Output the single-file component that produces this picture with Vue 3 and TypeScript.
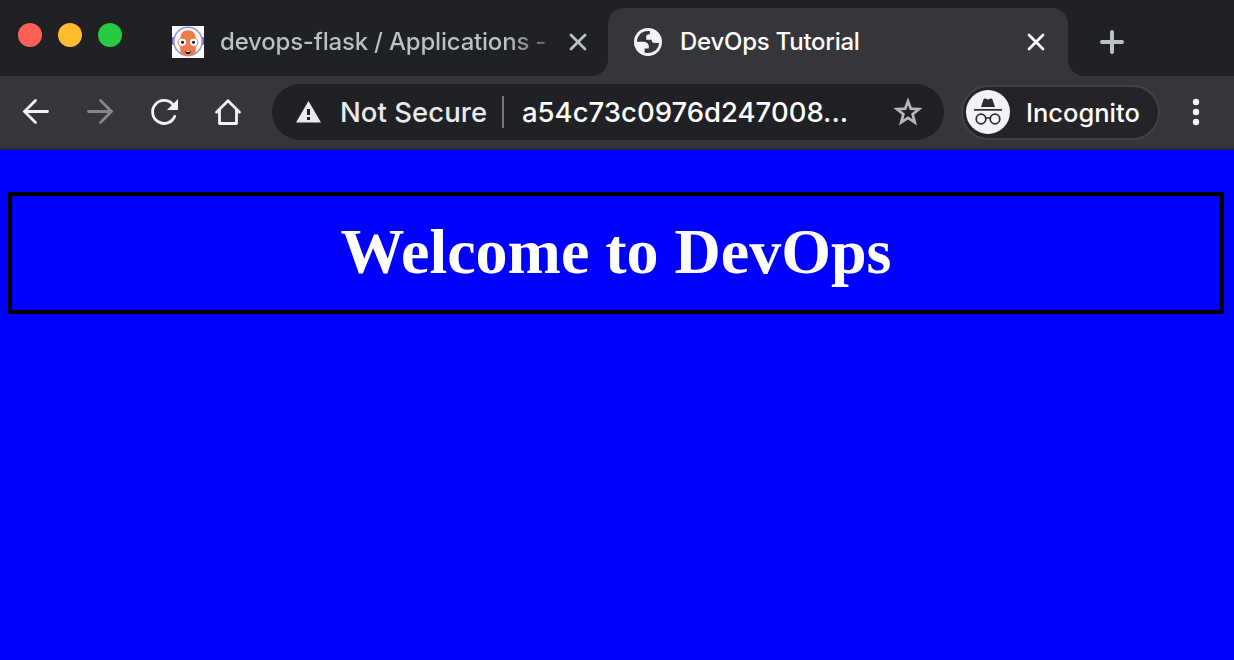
<script setup lang="ts">
interface Light {
  name: string
}
const lights: Light[] = [{ name: 'close' }, { name: 'minimise' }, { name: 'zoom' }]
const address = 'a54c73c0976d247008...'
</script>

<template>
  <div class="window">
    <header class="strip">
      <div class="lights">
        <i v-for="l in lights" :key="l.name" class="light" :class="l.name"></i>
      </div>
      <div class="tab idle">
        <svg class="favicon" width="32" height="32" viewBox="0 0 32 32">
          <rect width="32" height="32" fill="#fff" />
          <rect x="0" y="11" width="2.4" height="8" rx="1" fill="#7566b8" />
          <rect x="29.6" y="11" width="2.4" height="8" rx="1" fill="#7566b8" />
          <circle cx="16" cy="15.5" r="14.2" fill="#f4f8fc" stroke="#9a8fce" stroke-width="1.4" />
          <path d="M8.3 13C8.3 7.5 11 4.3 16 4.3S23.7 7.5 23.7 13V27Q20 30 16 30T8.3 27Z" fill="#ef7b4d" />
          <circle cx="10.3" cy="16.3" r="4.1" fill="#fff" stroke="#ef7b4d" stroke-width="1" />
          <circle cx="21.7" cy="16.3" r="4.1" fill="#fff" stroke="#ef7b4d" stroke-width="1" />
          <circle cx="10.5" cy="16.2" r="1.5" fill="#111" />
          <circle cx="21.5" cy="16.2" r="1.5" fill="#111" />
          <path d="M13.2 24.7Q16 26.2 18.8 24.7Q18.5 28 16 28T13.2 24.7Z" fill="#111" />
          <path d="M14.2 25.1h3.6v.9h-3.6z" fill="#fff" />
        </svg>
        <span class="title idle-title">devops-flask / Applications -</span>
        <svg class="cross" width="20" height="20" viewBox="0 0 20 20">
          <path d="M3 3 17 17M17 3 3 17" stroke="#bdc1c6" stroke-width="2.8" stroke-linecap="round" />
        </svg>
      </div>
      <div class="tab active">
        <svg width="28" height="28" viewBox="0 0 28 28">
          <circle cx="14" cy="14" r="14" fill="#f1f3f4" />
          <path d="M16 3.2C9 2 3 7 3 13.8H9.2C12 13.8 14.4 15 14.8 17.8V20.5H10.6V24.4C17.5 26.6 24.8 22 25 15H21C18.5 15 17.8 14 17.6 11.8H12.2V8.4C12.2 7 13.2 6.4 15.8 6.2Z" fill="#35363a" />
        </svg>
        <span class="title active-title">DevOps Tutorial</span>
        <svg class="cross end" width="20" height="20" viewBox="0 0 20 20">
          <path d="M3 3 17 17M17 3 3 17" stroke="#fff" stroke-width="2.8" stroke-linecap="round" />
        </svg>
      </div>
      <svg class="plus" width="24" height="24" viewBox="0 0 24 24">
        <path d="M2 12H22M12 2V22" stroke="#bdc1c6" stroke-width="4" stroke-linecap="round" />
      </svg>
    </header>

    <nav class="toolbar">
      <div class="buttons">
        <svg width="32" height="32" viewBox="20 96 32 32">
          <path d="M47.5 111.5H25M35.5 100.5 24.5 111.5 35.5 122.5" class="line" />
        </svg>
        <svg width="32" height="32" viewBox="84 96 32 32">
          <path d="M88.5 111.5H111M100.5 100.5 111.5 111.5 100.5 122.5" class="line dim" />
        </svg>
        <svg width="32" height="32" viewBox="148 96 32 32">
          <path d="M174.7 116.4A11.5 11.5 0 1 1 172.6 104.2" class="line" />
          <path d="M178 99V110H167Z" fill="#f1f3f4" />
        </svg>
        <svg width="32" height="32" viewBox="212 96 32 32">
          <path d="M216.5 112.3 228 100.8 239.5 112.3M219.5 110V123.5H236.5V110" class="line home" />
        </svg>
      </div>
      <div class="omnibox">
        <svg width="26" height="24" viewBox="0 0 26 24">
          <path d="M13.5 1 26 22.6H1Z" fill="#e8eaed" />
          <path d="M12 9h3v6h-3zM12 17h3v3h-3z" fill="#202124" />
        </svg>
        <span class="secure">Not Secure</span>
        <i class="rule"></i>
        <span class="address">{{ address }}</span>
        <svg class="star" width="30" height="30" viewBox="893 97 30 30">
          <path d="M908 101.2 910.8 108.7 919 109.1 912.6 114.2 914.8 122.3 908 117.8 901.2 122.3 903.4 114.2 897 109.1 905.2 108.7Z" fill="none" stroke="#b6b8ba" stroke-width="2.7" />
        </svg>
      </div>
      <div class="profile">
        <svg width="44" height="44" viewBox="966 90 44 44">
          <circle cx="988" cy="112" r="22" fill="#f1f3f4" />
          <path d="M981 107 983.6 99.3Q984 98.2 985.2 98.6L988 99.4 990.8 98.6Q992 98.2 992.4 99.3L995 107Z" fill="#2b2c30" />
          <path d="M974 109H1002V110.7H974Z" fill="#2b2c30" />
          <g fill="none" stroke="#2b2c30" stroke-width="1.7">
            <circle cx="981" cy="119" r="4.8" />
            <circle cx="995" cy="119" r="4.8" />
            <path d="M985.8 118.6Q988 116.9 990.2 118.6" />
          </g>
        </svg>
        <span class="incognito">Incognito</span>
      </div>
      <svg class="menu" width="8" height="28" viewBox="0 0 8 28">
        <circle cx="4" cy="4" r="3.2" />
        <circle cx="4" cy="14" r="3.2" />
        <circle cx="4" cy="24" r="3.2" />
      </svg>
    </nav>

    <main class="page">
      <h1 class="banner"><span>Welcome to DevOps</span></h1>
    </main>
  </div>
</template>

<style>
body {
  margin: 0;
  overflow: hidden;
}
</style>

<style scoped>
.window {
  width: 1234px;
  height: 660px;
  display: flex;
  flex-direction: column;
  background: #202124;
  font-family: Inter, Roboto, "Liberation Sans", sans-serif;
  font-weight: 450;
  overflow: hidden;
}
svg,
i {
  display: block;
  flex: none;
}
span {
  white-space: nowrap;
}
.strip {
  height: 76px;
  display: flex;
  flex: none;
}
.lights {
  display: flex;
  gap: 16px;
  padding: 23px 0 0 18px;
  width: 154px;
  box-sizing: border-box;
}
.light {
  width: 24px;
  height: 24px;
  border-radius: 50%;
}
.close {
  background: #ff5f57;
}
.minimise {
  background: #febc2e;
}
.zoom {
  background: #28ca42;
}
.tab {
  display: flex;
  align-items: center;
  box-sizing: border-box;
  height: 68px;
  margin-top: 8px;
}
.idle {
  width: 454px;
  padding-left: 18px;
}
.title {
  font-size: 24px;
  line-height: 32px;
}
.idle-title {
  flex: none;
  width: 332px;
  margin: 0 16px;
  overflow: hidden;
  letter-spacing: -0.2px;
  color: transparent;
  background: linear-gradient(90deg, #bdc1c6 285px, #4e5053 332px);
  background-clip: text;
}
.active {
  position: relative;
  width: 460px;
  padding: 0 22px 0 26px;
  border-radius: 16px 16px 0 0;
  background: #35363a;
}
.active::before,
.active::after {
  content: "";
  position: absolute;
  bottom: 0;
  width: 16px;
  height: 16px;
}
.active::before {
  left: -16px;
  background: radial-gradient(circle at 0 0, transparent 15.6px, #35363a 16.2px);
}
.active::after {
  right: -16px;
  background: radial-gradient(circle at 100% 0, transparent 15.6px, #35363a 16.2px);
}
.active-title {
  margin-left: 18px;
  letter-spacing: -0.25px;
  color: #fff;
}
.end {
  margin-left: auto;
}
.plus {
  margin: 30px 0 0 32px;
}
.toolbar {
  height: 74px;
  flex: none;
  display: flex;
  align-items: center;
  box-sizing: border-box;
  padding-left: 20px;
  border-bottom: 2px solid #28292c;
  background: #35363a;
}
.buttons {
  display: flex;
  gap: 32px;
}
.line {
  fill: none;
  stroke: #f1f3f4;
  stroke-width: 2.8;
  stroke-linecap: round;
}
.dim {
  stroke: #86878a;
}
.home {
  stroke-linejoin: round;
}
.omnibox {
  display: flex;
  align-items: center;
  box-sizing: border-box;
  width: 672px;
  height: 56px;
  margin-left: 28px;
  padding: 0 21px 0 23px;
  border-radius: 28px;
  background: #202124;
}
.secure,
.address {
  font-size: 27.5px;
  line-height: 36px;
}
.secure {
  width: 147px;
  margin-left: 19px;
  letter-spacing: 0.05px;
  color: #e8eaed;
}
.rule {
  width: 2px;
  height: 32px;
  margin-left: 15px;
  background: #77787b;
}
.address {
  margin-left: 18px;
  color: #fff;
}
.star {
  margin-left: auto;
}
.profile {
  display: flex;
  align-items: center;
  box-sizing: border-box;
  width: 199px;
  height: 55px;
  margin-left: 17px;
  padding-left: 3px;
  border: 2px solid #414246;
  border-radius: 28px;
  background: #242328;
}
.incognito {
  margin-left: 16px;
  padding-top: 2px;
  font-size: 25.5px;
  line-height: 34px;
  color: #fff;
}
.menu {
  margin-left: 32px;
  fill: #f1f3f4;
}
.page {
  flex: 1;
  padding: 42px 10px 0 8px;
  background: #0000ff;
}
.banner {
  display: flex;
  align-items: center;
  justify-content: center;
  box-sizing: border-box;
  height: 122px;
  margin: 0;
  padding-bottom: 2px;
  border: 4px solid #000;
  font: bold 64px "Liberation Serif", serif;
  color: #fff;
}
</style>
